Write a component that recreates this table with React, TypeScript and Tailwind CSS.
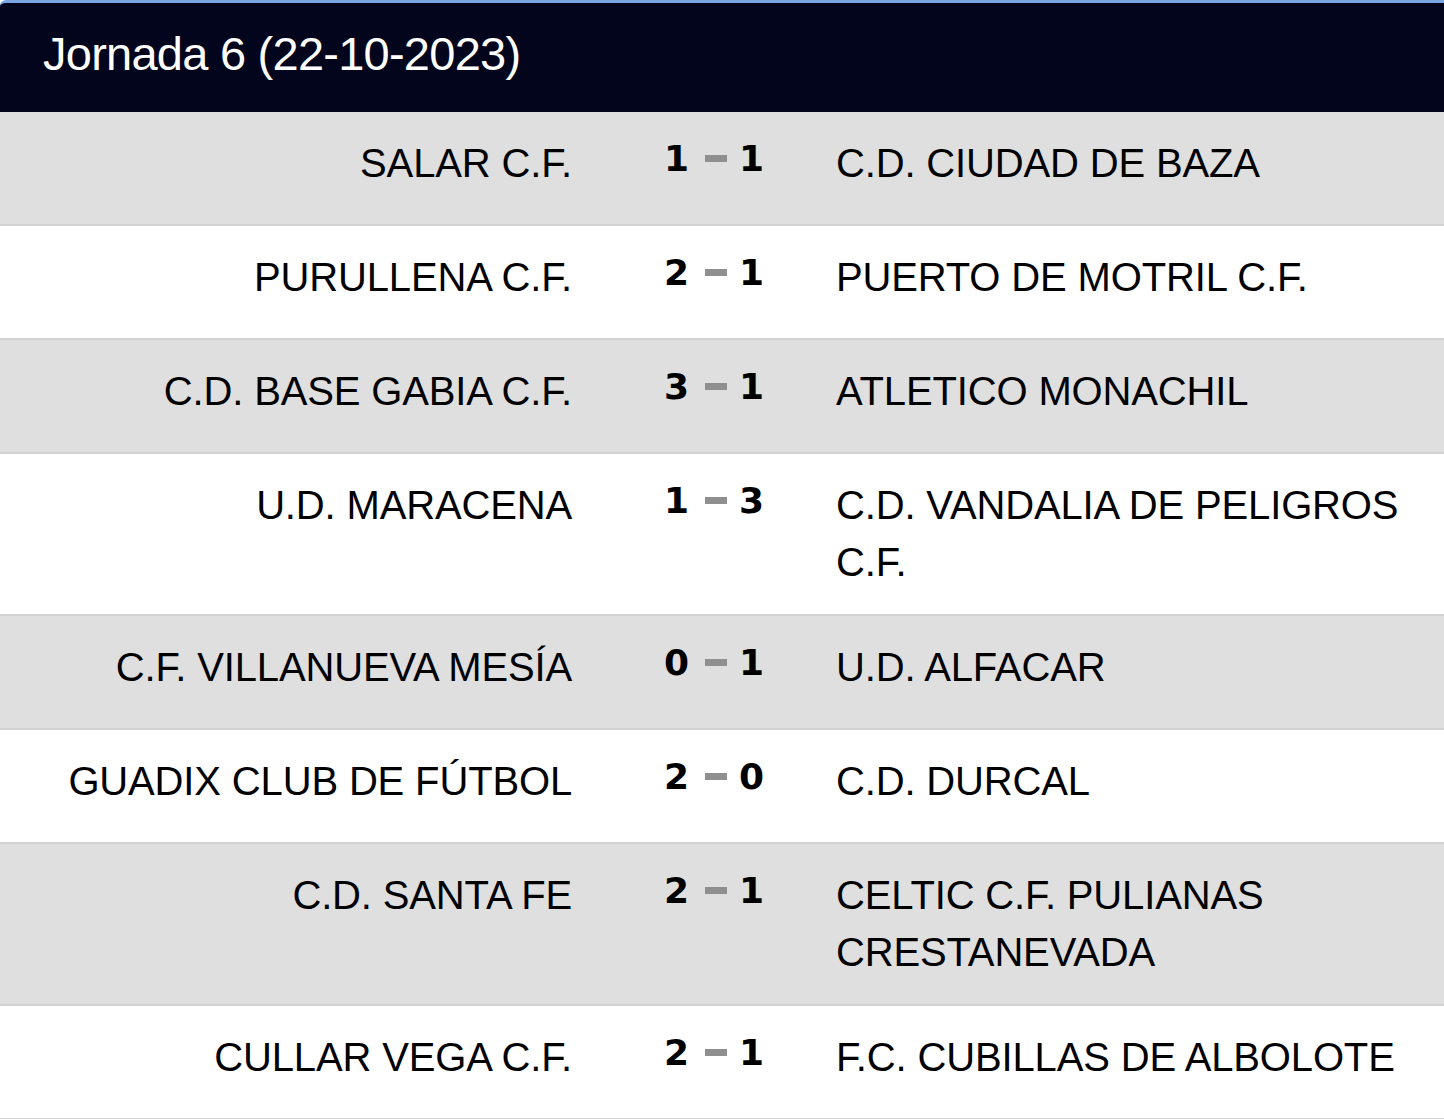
import React from "react";

type Match = { home: string; hs: string; as: string; away: string };

const matches: Match[] = [
  { home: "SALAR C.F.", hs: "1", as: "1", away: "C.D. CIUDAD DE BAZA" },
  { home: "PURULLENA C.F.", hs: "2", as: "1", away: "PUERTO DE MOTRIL C.F." },
  { home: "C.D. BASE GABIA C.F.", hs: "3", as: "1", away: "ATLETICO MONACHIL" },
  { home: "U.D. MARACENA", hs: "1", as: "3", away: "C.D. VANDALIA DE PELIGROS C.F." },
  { home: "C.F. VILLANUEVA MESÍA", hs: "0", as: "1", away: "U.D. ALFACAR" },
  { home: "GUADIX CLUB DE FÚTBOL", hs: "2", as: "0", away: "C.D. DURCAL" },
  { home: "C.D. SANTA FE", hs: "2", as: "1", away: "CELTIC C.F. PULIANAS CRESTANEVADA" },
  { home: "CULLAR VEGA C.F.", hs: "2", as: "1", away: "F.C. CUBILLAS DE ALBOLOTE" },
];

export default function App() {
  return (
    <div
      className="w-[1444px] h-[1119px] overflow-hidden bg-white text-black"
      style={{ fontFamily: '"Liberation Sans", Arial, sans-serif' }}
    >
      <div className="h-[112px] bg-[#03051c] border-t-[3px] border-[#7aa5e0] rounded-tl-[6px] flex items-center pl-[43px] pb-[9px]">
        <span className="text-white text-[47px] leading-none tracking-[-0.75px]">Jornada 6 (22-10-2023)</span>
      </div>
      {matches.map((m, i) => (
        <div
          key={i}
          className={`flex min-h-[114px] border-b-[2px] border-[#d2d2d2] ${i % 2 === 0 ? "bg-[#dfdfdf]" : "bg-white"}`}
        >
          <div className="w-[600px] shrink-0 pr-[28px] text-right py-[23px] text-[40px] leading-[57px] tracking-[-0.15px]">
            {m.home}
          </div>
          <div className="w-[236px] shrink-0 pt-[22px] pr-[8px] flex items-start justify-center">
            <div
              className="flex items-center h-[49px] font-bold text-[36px] leading-none"
              style={{ fontFamily: '"DejaVu Sans", Verdana, sans-serif' }}
            >
              <span>{m.hs}</span>
              <span className="block w-[22px] h-[7px] bg-[#8f8f8f] ml-[16px] mr-[12px]" />
              <span>{m.as}</span>
            </div>
          </div>
          <div className="flex-1 pr-[20px] py-[23px] text-[40px] leading-[57px] tracking-[-0.15px]">
            {m.away}
          </div>
        </div>
      ))}
    </div>
  );
}
